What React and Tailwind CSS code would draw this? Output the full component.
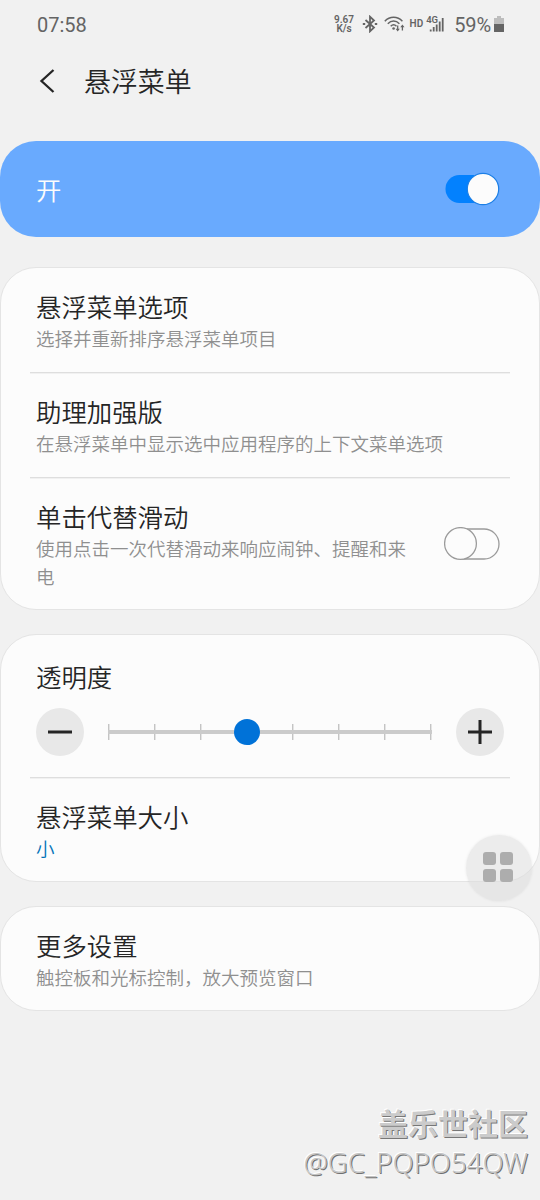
import React, { useState } from "react";
import clsx from "clsx";

const ticks = [0, 1, 2, 3, 4, 5, 6, 7];

const StatusBar = () => (
  <div className="flex h-12 items-center justify-between pl-9 pr-9 font-[Roboto,sans-serif] text-[#646464]">
    <span className="pl-px pt-px text-[20px] leading-none">07:58</span>
    <div className="flex items-center">
      <div className="w-[21px] text-center text-[10px] font-semibold leading-[9px]">
        <div>9.67</div>
        <div>K/s</div>
      </div>
      <svg className="ml-[7px]" width="16" height="18" viewBox="0 0 16 18" fill="none" stroke="currentColor" strokeWidth="1.8">
        <path d="M3.5 5 12 12.5 8 16.3V1.7L12 5.5 3.5 13" />
        <path d="M.8 9h2.4M12.8 9h2.4" />
      </svg>
      <svg className="ml-[6px]" width="22" height="18" viewBox="0 0 22 18" fill="none" stroke="currentColor" strokeWidth="1.5">
        <path d="M.8 6.2C5.800 1 13.400 1 18.400 6.200M3.800 8.800c3.500-3.600 8.100-3.600 11.600 0M6.700 11.200c1.800-1.700 4-1.700 5.800 0" />
        <circle cx="9.600" cy="13.500" r="1.300" fill="currentColor" stroke="none" />
        <path d="M13.700 10.500v4.500M18.400 15.500V11" strokeWidth="1.300" />
        <path d="M11.600 13.700h4.200l-2.100 2.800zM16.300 12.300h4.200l-2.100-2.800z" fill="currentColor" stroke="none" />
      </svg>
      <span className="ml-1 text-[10px] font-semibold leading-none">HD</span>
      <div className="relative ml-[3px] h-[18px] w-[18px]">
        <span className="absolute left-0 top-0 text-[9.500px] font-semibold leading-none">4G</span>
        <svg className="absolute bottom-px right-0" width="15" height="16" viewBox="0 0 15 16" fill="currentColor">
          <path d="M.8 13.500h1.800v2H.8zM3.800 11h1.800v4.500H3.800zM6.800 8.500h1.800v7H6.800zM9.800 5.500h1.800v10H9.800zM12.800 2h1.800v13.500h-1.800z" />
        </svg>
      </div>
      <span className="ml-[10px] pt-px text-[20px] leading-none tracking-[-0.1px]">59%</span>
      <svg className="ml-[3px]" width="10" height="17" viewBox="0 0 10 17">
        <path d="M3 0h4v2h3v6H0V2h3z" fill="#bdbdbd" />
        <path d="M0 8h10v7.500q0 .5-.5.5h-9q-.5 0-.5-.5z" fill="#646464" />
      </svg>
    </div>
  </div>
);

const Card = ({ className, children }) => (
  <section className={clsx("rounded-[36px] border border-[#e4e4e4] bg-[#fcfcfc]", className)}>{children}</section>
);

const Divider = () => <div className="mx-[29px] h-px bg-[#dedede] shadow-[0_1px_0_#f1f1f1]" />;

const Title = ({ children }) => <h2 className="text-[25.4px] font-[350] leading-9 text-[#252525]">{children}</h2>;

const Row = ({ title, desc, className, descClass = "text-[#8f8f8f]" }) => (
  <div className={clsx("px-[35px] pt-5", className)}>
    <Title>{title}</Title>
    <p className={clsx("text-[18.5px] font-[350] leading-7", descClass)}>{desc}</p>
  </div>
);

const Toggle = ({ on, onClick }) => (
  <button onClick={onClick} className="h-[34px] w-14 shrink-0">
    {on ? (
      <svg width="56" height="34" viewBox="0 0 56 34">
        <rect x="1.500" y="3" width="50" height="28" rx="14" fill="#0381fe" />
        <circle cx="39" cy="17" r="15.700" fill="#fcfcfc" stroke="#1c7fe6" strokeWidth="1.200" />
      </svg>
    ) : (
      <svg width="56" height="34" viewBox="0 0 56 34" fill="#fcfcfc" stroke="#9b9b9b" strokeWidth="1.300">
        <rect x="3" y="2" width="52" height="30" rx="15" />
        <circle cx="16.500" cy="16.500" r="15.900" />
      </svg>
    )}
  </button>
);

const RoundButton = ({ plus, onClick }) => (
  <button onClick={onClick} className="flex size-12 items-center justify-center rounded-full bg-[#e8e8e8]">
    <svg width="24" height="24" viewBox="0 0 24 24" stroke="#252525" strokeWidth="3">
      <path d={plus ? "M0 12h24M12 0v24" : "M0 12h24"} />
    </svg>
  </button>
);

const Slider = ({ value, onChange }) => (
  <div className="flex items-center justify-between px-[35px]">
    <RoundButton onClick={() => onChange(Math.max(0, value - 1))} />
    <div className="relative flex h-[26px] w-[324px] items-center justify-between pr-px">
      <div className="absolute inset-x-0 top-[11px] h-1 bg-[#cbcbcb]" />
      {ticks.map((t) => (
        <span key={t} className="h-4 w-px bg-[#c4c4c4] shadow-[1px_0_0_#e4e4e4]" />
      ))}
      <span
        className="absolute top-0 size-[26px] -translate-x-1/2 rounded-full bg-[#0072d8]"
        style={{ left: `${(value / 7) * 100}%` }}
      />
    </div>
    <RoundButton plus onClick={() => onChange(Math.min(7, value + 1))} />
  </div>
);

const App = () => {
  const [enabled, setEnabled] = useState(true);
  const [tap, setTap] = useState(false);
  const [opacity, setOpacity] = useState(3);

  return (
    <div
      lang="zh-CN"
      className="relative h-[1200px] w-[540px] overflow-hidden bg-[#f1f1f1] font-['Noto_Sans_CJK_SC',sans-serif]"
    >
      <StatusBar />

      <header className="flex h-[66px] items-center pl-[39px]">
        <svg width="16" height="26" viewBox="0 0 16 26" fill="none" stroke="#252525" strokeWidth="2.300">
          <path d="M14.500 2 2.500 13l12 11" />
        </svg>
        <h1 className="ml-[29px] text-[26.900px] font-[350] leading-none text-[#252525]">悬浮菜单</h1>
      </header>

      <section className="mt-[27px] flex h-24 items-center justify-between rounded-[36px] bg-[#69aafe] pl-9 pr-10">
        <span className="text-[25.400px] font-[350] text-[#fcfcfc]">开</span>
        <Toggle on={enabled} onClick={() => setEnabled(!enabled)} />
      </section>

      <Card className="mt-[30px] h-[343px]">
        <Row title="悬浮菜单选项" desc="选择并重新排序悬浮菜单项目" className="h-[104px]" />
        <Divider />
        <Row title="助理加强版" desc="在悬浮菜单中显示选中应用程序的上下文菜单选项" className="h-[104px]" />
        <Divider />
        <div className="flex h-[131px] items-center justify-between pr-[39px]">
          <Row title="单击代替滑动" desc="使用点击一次代替滑动来响应闹钟、提醒和来电" className="h-full w-[420px] !pr-3" />
          <Toggle on={tap} onClick={() => setTap(!tap)} />
        </div>
      </Card>

      <Card className="mt-6 h-[248px]">
        <div className="h-[142px] pt-[23px]">
          <div className="mb-[14px] px-[35px]">
            <Title>透明度</Title>
          </div>
          <Slider value={opacity} onChange={setOpacity} />
        </div>
        <Divider />
        <Row title="悬浮菜单大小" desc="小" descClass="text-[#0072b8]" />
      </Card>

      <Card className="mt-6 h-[105px]">
        <Row title="更多设置" desc="触控板和光标控制，放大预览窗口" />
      </Card>

      {/* Floating assistant shortcut */}
      <div className="absolute left-[466px] top-[835px] flex size-[66px] items-center justify-center rounded-full bg-[#dcdcdc]/50 pb-[2px] pr-[2px] shadow-[0_0_3px_rgba(0,0,0,0.080)]">
        <div className="grid grid-cols-2 gap-1">
          {[0, 1, 2, 3].map((i) => (
            <span key={i} className="size-[13px] rounded-[3px] bg-[#adadad]" />
          ))}
        </div>
      </div>

      {/* Watermark */}
      <div className="absolute bottom-[18px] right-[12px] text-right">
        <div className="mb-[3px] text-[30px] font-bold leading-[38px] text-[#cbcbcb] [text-shadow:1px_1px_0_#777,-1px_-1px_0_#fff]">
          盖乐世社区
        </div>
        <div className="font-['Noto_Sans',sans-serif] text-[27.500px] font-light leading-[38px] text-[#c4c4c4] [text-shadow:-1px_-1px_0_#fff,1px_1px_0_#707070]">
          @GC_PQPO54QW
        </div>
      </div>
    </div>
  );
};

export default App;
